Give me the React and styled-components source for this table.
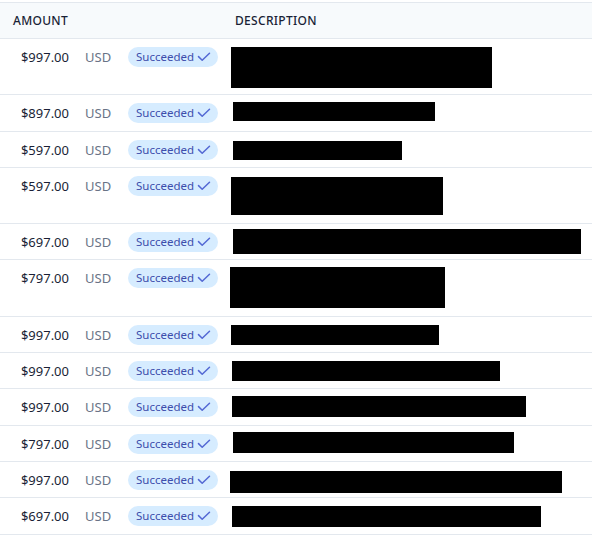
import React from "react";
import styled, { createGlobalStyle } from "styled-components";

const payments = [
  { amount: "$997.00", lines: 2, box: { x: 6, y: 8, w: 261, h: 41 } },
  { amount: "$897.00", lines: 1, box: { x: 8, y: 7, w: 202, h: 19 } },
  { amount: "$597.00", lines: 1, box: { x: 8, y: 9, w: 169, h: 19 } },
  { amount: "$597.00", lines: 2, box: { x: 6, y: 9, w: 212, h: 38 } },
  { amount: "$697.00", lines: 1, box: { x: 8, y: 5, w: 348, h: 25 } },
  { amount: "$797.00", lines: 2, box: { x: 5, y: 7, w: 215, h: 41 } },
  { amount: "$997.00", lines: 1, box: { x: 6, y: 8, w: 208, h: 20 } },
  { amount: "$997.00", lines: 1, box: { x: 7, y: 8, w: 268, h: 20 } },
  { amount: "$997.00", lines: 1, box: { x: 7, y: 7, w: 294, h: 21 } },
  { amount: "$797.00", lines: 1, box: { x: 8, y: 6, w: 281, h: 21 } },
  { amount: "$997.00", lines: 1, box: { x: 5, y: 9, w: 332, h: 22 } },
  { amount: "$697.00", lines: 1, box: { x: 7, y: 8, w: 309, h: 21 } },
];

const GlobalStyle = createGlobalStyle`
  body {
    margin: 0;
    background: #fff;
    font-family: "Noto Sans", "Open Sans", sans-serif;
  }
`;

const Table = styled.div`
  padding-top: 2px;
  width: 592px;
`;

const columns = "77px 43px 105px 1fr";

const HeaderRow = styled.div`
  display: grid;
  grid-template-columns: ${columns};
  height: 35px;
  align-items: center;
  background: #f7fafc;
  border-top: 1px solid #e3e8ee;
  border-bottom: 1px solid #e3e8ee;
`;

const HeadCell = styled.div`
  grid-column: ${(p) => p.$col};
  padding-left: ${(p) => p.$pad}px;
  font-size: 12px;
  font-weight: 500;
  letter-spacing: 0.3px;
  text-transform: uppercase;
  color: #1a1f36;
  white-space: nowrap;
`;

const Row = styled.div`
  display: grid;
  grid-template-columns: ${columns};
  align-items: start;
  height: ${(p) => (p.$lines === 2 ? 55.3 : 35.3)}px;
  border-bottom: 1px solid #e3e8ee;
`;

const Amount = styled.div`
  padding: 8px 8px 0 0;
  line-height: 20px;
  font-size: 13px;
  text-align: right;
  color: #1a1f36;
`;

const Currency = styled.div`
  padding: 8px 0 0 8px;
  line-height: 20px;
  font-size: 13px;
  color: #697386;
`;

const StatusCell = styled.div`
  display: flex;
  padding: 8px 0 0 8px;
`;

const Badge = styled.span`
  display: inline-flex;
  align-items: center;
  gap: 3px;
  height: 20px;
  padding: 0 7px 0 8px;
  border-radius: 10px;
  background: #d6ecff;
  color: #3d4eac;
  font-size: 11.5px;
  line-height: 20px;
  white-space: nowrap;
`;

const Description = styled.div`
  min-width: 0;
`;

const Redaction = styled.div`
  margin-left: ${(p) => p.$x}px;
  margin-top: ${(p) => p.$y}px;
  width: ${(p) => p.$w}px;
  height: ${(p) => p.$h}px;
  background: #000;
`;

const Check = () => (
  <svg width="14" height="10" viewBox="0 0 14 10" fill="none">
    <path
      d="M1.5 4.6 L5.2 8.2 L12.5 1.2"
      stroke="#5469d4"
      strokeWidth="1.5"
      strokeLinecap="round"
      strokeLinejoin="round"
    />
  </svg>
);

export default function App() {
  return (
    <>
      <GlobalStyle />
      <Table>
        <HeaderRow>
          <HeadCell $col="1 / 3" $pad={13}>Amount</HeadCell>
          <HeadCell $col="4" $pad={10}>Description</HeadCell>
        </HeaderRow>
        {payments.map((p, i) => (
          <Row key={i} $lines={p.lines}>
            <Amount>{p.amount}</Amount>
            <Currency>USD</Currency>
            <StatusCell>
              <Badge>
                Succeeded
                <Check />
              </Badge>
            </StatusCell>
            <Description>
              <Redaction $x={p.box.x} $y={p.box.y} $w={p.box.w} $h={p.box.h} />
            </Description>
          </Row>
        ))}
      </Table>
    </>
  );
}
